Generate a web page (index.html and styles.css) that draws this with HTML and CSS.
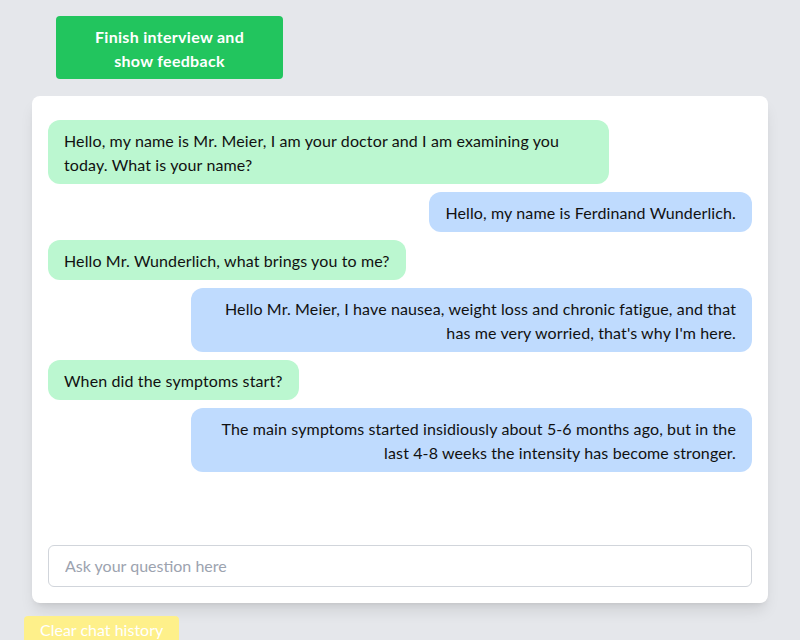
FILE: index.html
```html
<!DOCTYPE html>
<html>
<head>
<meta charset="utf-8">
<link rel="stylesheet" href="styles.css">
</head>
<body>
<div class="page">
  <button class="finish-btn">Finish interview and<br>show feedback</button>
  <div class="chat-card">
    <div class="messages">
      <div class="msg doctor">Hello, my name is Mr. Meier, I am your doctor and I am examining you today. What is your name?</div>
      <div class="msg patient">Hello, my name is Ferdinand Wunderlich.</div>
      <div class="msg doctor">Hello Mr. Wunderlich, what brings you to me?</div>
      <div class="msg patient">Hello Mr. Meier, I have nausea, weight loss and chronic fatigue, and that has me very worried, that's why I'm here.</div>
      <div class="msg doctor">When did the symptoms start?</div>
      <div class="msg patient">The main symptoms started insidiously about 5-6 months ago, but in the last 4-8 weeks the intensity has become stronger.</div>
    </div>
    <input class="question" type="text" placeholder="Ask your question here">
  </div>
  <button class="clear-btn">Clear chat history</button>
</div>
</body>
</html>
```

FILE: styles.css
```css
html, body {
  margin: 0;
  padding: 0;
  background: #e5e7eb;
  font-family: "Lato", "Noto Sans", sans-serif;
  font-size: 16px;
  line-height: 24px;
  color: #111111;
}
.page {
  display: flex;
  flex-direction: column;
  align-items: flex-start;
  padding-top: 16px;
  height: 640px;
  box-sizing: border-box;
  overflow: hidden;
}
.finish-btn {
  margin-left: 56px;
  width: 227px;
  height: 63px;
  background: #22c55e;
  color: #ffffff;
  font: inherit;
  font-weight: 700;
  letter-spacing: 0.3px;
  border: none;
  border-radius: 4px;
  padding: 9px 16px 8px;
}
.chat-card {
  align-self: stretch;
  margin: 17px 32px 0 32px;
  height: 507px;
  flex-shrink: 0;
  box-sizing: border-box;
  background: #ffffff;
  border-radius: 8px;
  box-shadow: 0 10px 15px -3px rgba(0,0,0,0.1), 0 4px 6px -4px rgba(0,0,0,0.1);
  padding: 16px;
  display: flex;
  flex-direction: column;
}
.messages {
  flex: 1;
  padding-top: 8px;
  display: flex;
  flex-direction: column;
  gap: 8px;
}
.msg {
  max-width: 561px;
  box-sizing: border-box;
  padding: 9px 16px 7px;
  border-radius: 12px;
  letter-spacing: 0.12px;
}
.doctor {
  align-self: flex-start;
  background: #bbf7d0;
  text-align: left;
}
.patient {
  align-self: flex-end;
  background: #bfdbfe;
  text-align: right;
}
.question {
  margin-top: 16px;
  height: 42px;
  box-sizing: border-box;
  border: 1px solid #d1d5db;
  border-radius: 6px;
  padding: 7px 16px 9px;
  font: inherit;
  color: #111111;
  outline: none;
}
.question::placeholder {
  color: #9ca3af;
}
.clear-btn {
  margin-top: 13px;
  margin-left: 24px;
  background: #fef08a;
  color: #ffffff;
  border: none;
  border-radius: 4px;
  font: inherit;
  padding: 0 16px 2px;
  height: 30px;
  flex-shrink: 0;
}
```
